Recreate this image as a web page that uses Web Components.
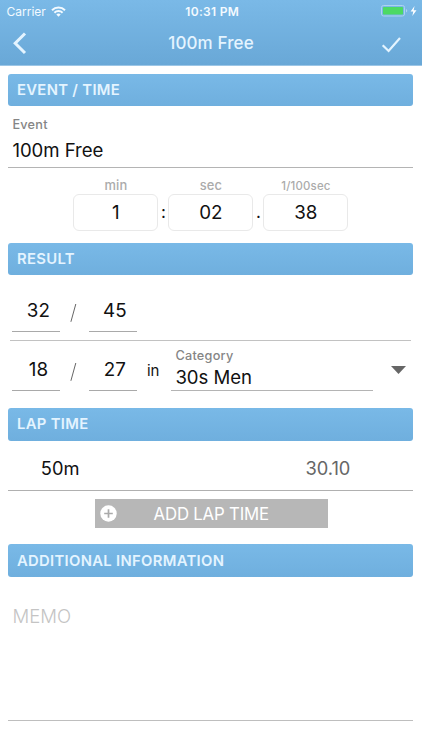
<!DOCTYPE html>
<html lang="en">
<head>
<meta charset="utf-8">
<title>100m Free</title>
<style>
  html, body {
    margin: 0;
    height: 100%;
    background: #fff;
    overflow: hidden;
  }
  body {
    font-family: Inter, "Liberation Sans", sans-serif;
    color: #111;
  }
</style>
</head>
<body>
<race-editor></race-editor>

<script>
"use strict";

const attach = (el, html) => {
  el.attachShadow({mode: "open"}).innerHTML = html;
};

customElements.define("status-bar", class extends HTMLElement {
  constructor() {
    super();
    attach(this, `
      <style>
        :host {
          display: grid;
          grid-template-columns: 1fr auto 1fr;
          align-items: center;
          height: 22px;
          padding: 0 4px 0 6.5px;
          color: #f3faff;
          font-size: 12px;
        }
        .left, .right {
          display: flex;
          align-items: center;
        }
        .carrier { margin-right: 5px; }
        .time { font-weight: 600; font-size: 12px; letter-spacing: 0.3px; }
        .right { justify-content: flex-end; }
        svg { display: block; }
      </style>
      <div class="left">
        <span class="carrier">Carrier</span>
        <svg width="15" height="11" viewBox="0 0 15 11" fill="none" stroke="#f3faff" stroke-width="2">
          <path d="M1 4.2a9.2 9.2 0 0 1 13 0"/>
          <path d="M3.4 6.8a5.8 5.8 0 0 1 8.2 0"/>
          <path d="M7.5 10.8L5.3 8.6a3.1 3.1 0 0 1 4.4 0z" fill="#f3faff" stroke="none"/>
        </svg>
      </div>
      <span class="time">10:31 PM</span>
      <div class="right">
        <svg width="37" height="12" viewBox="0 0 37 12">
          <rect x=".5" y=".5" width="23" height="10.5" rx="2" fill="none" stroke="#add3f0"/>
          <rect x="2" y="2" width="20" height="7.5" rx=".8" fill="#4cd964"/>
          <path d="M25 4v3.6q1.3-.5 1.3-1.8T25 4z" fill="#add3f0"/>
          <path d="M33.6 1L29.6 6.5h2.7L31.3 11l4.2-5.8h-2.9z" fill="#fff"/>
        </svg>
      </div>
    `);
  }
});

customElements.define("nav-bar", class extends HTMLElement {
  constructor() {
    super();
    attach(this, `
      <style>
        :host {
          display: grid;
          grid-template-columns: 60px 1fr 60px;
          align-items: center;
          height: 43px;
          color: #e4f4ff;
        }
        .title {
          padding-bottom: 2px;
          text-align: center;
          font-size: 17px;
          font-weight: 500;
          letter-spacing: 0.12px;
        }
        svg { display: block; }
      </style>
      <svg width="60" height="43" viewBox="0 0 60 43" fill="none" stroke="#e4f4ff" stroke-width="3">
        <path d="M25 11.5L15.2 21.2L25 31"/>
      </svg>
      <span class="title"><slot></slot></span>
      <svg width="60" height="43" viewBox="0 0 60 43" fill="none" stroke="#e4f4ff" stroke-width="2.2">
        <path d="M20.7 23.2L26.6 29L38 16"/>
      </svg>
    `);
  }
});

customElements.define("section-title", class extends HTMLElement {
  constructor() {
    super();
    attach(this, `
      <style>
        :host {
          display: flex;
          align-items: center;
          box-sizing: border-box;
          height: 32.5px;
          margin: 0 8.6px 0 8.4px;
          padding-left: 8.6px;
          border-radius: 3px;
          background: linear-gradient(#79b9e7, #6fafde);
          color: #e4f4ff;
          font-size: 14.8px;
          font-weight: 600;
          letter-spacing: 0.32px;
        }
      </style>
      <slot></slot>
    `);
  }
});

customElements.define("text-field", class extends HTMLElement {
  constructor() {
    super();
    attach(this, `
      <style>
        :host {
          display: flex;
          flex-direction: column;
          box-sizing: border-box;
          border-bottom: 1px solid #b4b4b4;
        }
        .label {
          color: #858585;
          font-size: 12.7px;
          font-weight: 500;
          line-height: 16px;
          letter-spacing: 0.25px;
        }
        .value {
          font-size: 18.6px;
          line-height: 24px;
          margin-top: var(--value-gap, 0);
          letter-spacing: -0.05px;
        }
      </style>
      <span class="label">${this.getAttribute("label")}</span>
      <span class="value"><slot></slot></span>
    `);
  }
});

customElements.define("time-box", class extends HTMLElement {
  constructor() {
    super();
    attach(this, `
      <style>
        :host { display: block; width: 85px; text-align: center; }
        .unit {
          height: 16px;
          line-height: 16px;
          color: #ababab;
          font-size: 12.9px;
          font-weight: 500;
          letter-spacing: 0.1px;
        }
        :host([small]) .unit { font-size: 11.4px; letter-spacing: 0.2px; }
        .box {
          box-sizing: border-box;
          height: 37px;
          line-height: 35px;
          border: 1px solid #e9e9e9;
          border-radius: 6px;
          font-size: 18.8px;
        }
      </style>
      <div class="unit">${this.getAttribute("unit")}</div>
      <div class="box"><slot></slot></div>
    `);
  }
});

customElements.define("rank-field", class extends HTMLElement {
  constructor() {
    super();
    attach(this, `
      <style>
        :host {
          display: flex;
          align-items: flex-start;
          width: 125px;
        }
        .num {
          box-sizing: border-box;
          width: 48px;
          height: 34px;
          padding-left: 4px;
          line-height: 26px;
          border-bottom: 1px solid #a9a9a9;
          font-size: 18.8px;
          text-align: center;
        }
        svg { display: block; width: 28.5px; height: 34px; }
      </style>
      <div class="num">${this.getAttribute("rank")}</div>
      <svg viewBox="0 0 28.5 34"><path d="M10.9 23.8L15.8 6" stroke="#666" fill="none"/></svg>
      <div class="num">${this.getAttribute("total")}</div>
    `);
  }
});

customElements.define("lap-row", class extends HTMLElement {
  constructor() {
    super();
    attach(this, `
      <style>
        :host {
          display: flex;
          justify-content: space-between;
          align-items: center;
          box-sizing: border-box;
          height: 50px;
          margin: 0 8.6px 0 8.4px;
          padding: 6px 63px 0 32.4px;
          border-bottom: 1px solid #b0b0b0;
          font-size: 18.3px;
        }
        .time { color: #666; }
      </style>
      <slot></slot>
      <span class="time">${this.getAttribute("time")}</span>
    `);
  }
});

customElements.define("add-button", class extends HTMLElement {
  constructor() {
    super();
    attach(this, `
      <style>
        :host {
          display: grid;
          grid-template-columns: 27px 1fr;
          align-items: center;
          width: 233px;
          height: 28.5px;
          background: #b7b7b7;
          color: #fff;
          font-size: 16.8px;
        }
        svg { display: block; margin-left: 5px; }
        .text { padding: 1.5px 0 0 32px; white-space: nowrap; letter-spacing: -0.2px; }
      </style>
      <svg width="17" height="17" viewBox="0 0 17 17">
        <circle cx="8.5" cy="8.5" r="8.2" fill="#fff"/>
        <path d="M8.5 4.2v8.6M4.2 8.5h8.6" stroke="#aaa" stroke-width="1.7"/>
      </svg>
      <span class="text"><slot></slot></span>
    `);
  }
});

customElements.define("race-editor", class extends HTMLElement {
  constructor() {
    super();
    attach(this, `
      <style>
        :host { display: block; width: 422px; height: 750px; }
        header {
          height: 66px;
          box-sizing: border-box;
          border-bottom: 1px solid #9cc6e6;
          background: linear-gradient(#7ab9e7, #69a8d7);
          margin-bottom: 7.5px;
        }
        .event { margin: 10.5px 8.6px 0 8.4px; padding: 0 0 5.5px 4px; --value-gap: 5px; }
        .time {
          display: grid;
          grid-template-columns: 85px 10px 85px 10px 85px;
          margin: 9.5px 0 12px 73.4px;
        }
        .sep { padding-top: 22px; font-size: 17px; line-height: 24px; text-align: center; }
        .overall { margin: 23px 0 8px 12.4px; }
        .divider { height: 1px; margin: 0 10.6px 0 10.4px; background: #c2c2c2; }
        .category {
          display: flex;
          height: 50px;
          align-items: flex-end;
          padding-left: 12.4px;
          margin-bottom: 17px;
        }
        .in { width: 34px; font-size: 15px; line-height: 20px; padding-bottom: 10px; text-indent: 9.5px; }
        .category text-field {
          width: 201.5px;
          padding: 0 0 1px 4px;
          --value-gap: 1.5px;
        }
        .arrow { display: block; margin: 0 0 17px 18px; }
        add-button { margin: 8.5px 0 16.5px 94.6px; }
        .info { padding-top: 1px; }
        .memo {
          height: 144px;
          margin: 0 8.6px 0 8.4px;
          padding: 26.5px 0 0 4px;
          box-sizing: border-box;
          border-bottom: 1px solid #bebebe;
          color: #c4c4c4;
          font-size: 18.6px;
          font-weight: 300;
          line-height: 26px;
        }
      </style>
      <header>
        <status-bar></status-bar>
        <nav-bar>100m Free</nav-bar>
      </header>

      <section-title>EVENT / TIME</section-title>
      <text-field class="event" label="Event">100m Free</text-field>
      <div class="time">
        <time-box unit="min">1</time-box>
        <span class="sep">:</span>
        <time-box unit="sec">02</time-box>
        <span class="sep">.</span>
        <time-box unit="1/100sec" small>38</time-box>
      </div>

      <section-title>RESULT</section-title>
      <rank-field class="overall" rank="32" total="45"></rank-field>
      <div class="divider"></div>
      <div class="category">
        <rank-field rank="18" total="27"></rank-field>
        <span class="in">in</span>
        <text-field label="Category">30s Men</text-field>
        <svg class="arrow" width="15" height="8" viewBox="0 0 15 8"><path d="M0 0h15L7.5 8z" fill="#666"/></svg>
      </div>

      <section-title>LAP TIME</section-title>
      <lap-row time="30.10">50m</lap-row>
      <add-button>ADD LAP TIME</add-button>

      <section-title class="info">ADDITIONAL INFORMATION</section-title>
      <div class="memo">MEMO</div>
    `);
  }
});
</script>
</body>
</html>
